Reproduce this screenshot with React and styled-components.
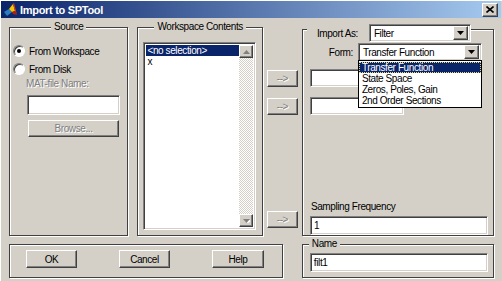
import styled, { createGlobalStyle } from "styled-components";

const GlobalStyle = createGlobalStyle`
  html, body { margin: 0; padding: 0; background: #d4d0c8; }
  body { font-family: "Liberation Sans", Arial, sans-serif; }
`;

const raised = `
  border: 1px solid;
  border-color: #fff #404040 #404040 #fff;
  box-shadow: inset -1px -1px 0 #808080, inset 1px 1px 0 #d4d0c8;
  background: #d4d0c8;
`;

const sunken = `
  border: 1px solid;
  border-color: #808080 #fff #fff #808080;
  box-shadow: inset 1px 1px 0 #404040, inset -1px -1px 0 #d4d0c8;
`;

const formTypes = [
  "Transfer Function",
  "State Space",
  "Zeros, Poles, Gain",
  "2nd Order Sections",
];

const MatlabIcon = () => (
  <svg width="14" height="14" viewBox="0 0 14 14">
    <polygon points="0,9 5,6 8,9 3,13" fill="#2a7fc0" />
    <polygon points="0,9 3,13 2,13 0,10" fill="#0b3d7a" />
    <polygon points="5,6 9,1 11,8 8,9" fill="#f7c600" />
    <polygon points="9,1 10,0 13,12 11,8" fill="#e0401a" />
    <polygon points="8,9 11,8 13,12 9,11" fill="#b02010" />
  </svg>
);

const CloseGlyph = () => (
  <svg width="8" height="7" viewBox="0 0 8 7">
    <path d="M0.5 0.5 L7.5 6.5 M7.5 0.5 L0.5 6.5" stroke="#000" strokeWidth="1.6" />
  </svg>
);

const DownTriangle = ({ disabled }) => (
  <svg width="7" height="4" viewBox="0 0 7 4">
    {disabled && <polygon points="1,1 8,1 4.5,5" fill="#fff" />}
    <polygon points="0,0 7,0 3.5,4" fill={disabled ? "#808080" : "#000"} />
  </svg>
);

const UpTriangle = () => (
  <svg width="7" height="4" viewBox="0 0 7 4">
    <polygon points="0,4 7,4 3.5,0" fill="#808080" />
  </svg>
);

const Combo = ({ value, width, children }) => (
  <ComboBox $w={width}>
    <ComboText>{value}</ComboText>
    <ComboArrow>
      <DownTriangle />
    </ComboArrow>
    {children}
  </ComboBox>
);

export default function App() {
  return (
    <>
      <GlobalStyle />
      <Window>
        <TitleBar>
          <MatlabIcon />
          <TitleText>Import to SPTool</TitleText>
          <CloseButton>
            <CloseGlyph />
          </CloseButton>
        </TitleBar>

        <Body>
          <TopRow>
            <Frame $w={120}>
              <Legend $center>Source</Legend>
              <RadioRow $mt={12}>
                <Radio $checked />
                From Workspace
              </RadioRow>
              <RadioRow $mt={6}>
                <Radio />
                From Disk
              </RadioRow>
              <DisabledLabel>MAT-file Name:</DisabledLabel>
              <Edit $w={93} $h={20} $mt={5} $ml={17} />
              <Button $w={91} $h={17} $mt={5} $ml={18} disabled>
                Browse...
              </Button>
            </Frame>

            <Frame $w={126} $ml={9}>
              <Legend $center>Workspace Contents</Legend>
              <ListBox>
                <ListItems>
                  <ListItem $selected>&lt;no selection&gt;</ListItem>
                  <ListItem>x</ListItem>
                </ListItems>
                <ScrollBar>
                  <ScrollButton>
                    <UpTriangle />
                  </ScrollButton>
                  <ScrollTrack />
                  <ScrollButton>
                    <DownTriangle disabled />
                  </ScrollButton>
                </ScrollBar>
              </ListBox>
            </Frame>

            <ArrowColumn>
              <Button $w={31} $h={17} disabled>--&gt;</Button>
              <Button $w={31} $h={17} $mt={11} disabled>--&gt;</Button>
              <Button $w={31} $h={17} $mt="auto" disabled>--&gt;</Button>
            </ArrowColumn>

            <Frame $w={193} $ml={4} $mt={2}>
              <ImportHeader>
                <span>Import As:</span>
                <Combo value="Filter" width={102} />
              </ImportHeader>
              <FormRow>
                <FormLabel>Form:</FormLabel>
                <Combo value="Transfer Function" width={124}>
                  <DropList>
                    {formTypes.map((t, i) => (
                      <DropItem key={t} $selected={i === 0}>
                        {t}
                      </DropItem>
                    ))}
                  </DropList>
                </Combo>
              </FormRow>
              <Edit $w={94} $h={18} $mt={8} $ml={7} />
              <Edit $w={94} $h={18} $mt={10} $ml={7} />
              <FieldLabel>Sampling Frequency</FieldLabel>
              <Edit $w={178} $h={19} $mt={3} $ml={7}>
                1
              </Edit>
            </Frame>
          </TopRow>

          <BottomRow>
            <ButtonFrame>
              <Button $w={51} $h={18}>OK</Button>
              <Button $w={51} $h={18}>Cancel</Button>
              <Button $w={52} $h={18}>Help</Button>
            </ButtonFrame>
            <Frame $w={193} $ml={19}>
              <Legend>Name</Legend>
              <Edit $w={178} $h={19} $mt={3} $ml={7}>
                filt1
              </Edit>
            </Frame>
          </BottomRow>
        </Body>
      </Window>
    </>
  );
}

const Window = styled.div`
  width: 502px;
  height: 281px;
  box-sizing: border-box;
  padding: 1px 1px 0 1px;
  background: #d4d0c8;
  box-shadow: inset 1px 1px 0 #fff;
  display: flex;
  flex-direction: column;
  overflow: hidden;
  font-family: "Liberation Sans", Arial, sans-serif;
  font-size: 10px;
  letter-spacing: -0.4px;
  color: #000;
`;

const TitleBar = styled.div`
  height: 17px;
  display: flex;
  align-items: center;
  padding: 0 3px 0 3px;
  background: linear-gradient(to right, #0a246a, #a6caf0);
`;

const TitleText = styled.span`
  margin-left: 2px;
  color: #fff;
  font-weight: bold;
  font-size: 11px;
  letter-spacing: -0.3px;
`;

const CloseButton = styled.div`
  ${raised}
  box-sizing: border-box;
  margin-left: auto;
  width: 16px;
  height: 14px;
  display: flex;
  align-items: center;
  justify-content: center;
`;

const Body = styled.div`
  flex: 1;
  display: flex;
  flex-direction: column;
  padding: 9px 7px 0 8px;
`;

const TopRow = styled.div`
  display: flex;
  height: 209px;
`;

const BottomRow = styled.div`
  display: flex;
  height: 34px;
  margin-top: 8px;
`;

const Frame = styled.div`
  box-sizing: border-box;
  width: ${(p) => p.$w}px;
  margin-left: ${(p) => p.$ml || 0}px;
  margin-top: ${(p) => p.$mt || 0}px;
  border: 1px solid #404040;
  box-shadow: inset 1px 1px 0 #fff, 1px 1px 0 #fff;
  display: flex;
  flex-direction: column;
  position: relative;
`;

const Legend = styled.div`
  align-self: ${(p) => (p.$center ? "center" : "flex-start")};
  margin: -7px 0 0 ${(p) => (p.$center ? 0 : 6)}px;
  height: 12px;
  line-height: 12px;
  padding: 0 3px;
  background: #d4d0c8;
`;

const RadioRow = styled.div`
  display: flex;
  align-items: center;
  gap: 4px;
  height: 12px;
  margin: ${(p) => p.$mt}px 0 0 3px;
`;

const Radio = styled.span`
  box-sizing: border-box;
  width: 12px;
  height: 12px;
  border-radius: 50%;
  border: 1px solid;
  border-color: #808080 #fff #fff #808080;
  background: #fff;
  box-shadow: inset 1px 1px 0 #404040;
  position: relative;
  &::after {
    content: "";
    display: ${(p) => (p.$checked ? "block" : "none")};
    position: absolute;
    left: 3px;
    top: 3px;
    width: 4px;
    height: 4px;
    border-radius: 50%;
    background: #000;
  }
`;

const DisabledLabel = styled.div`
  height: 12px;
  line-height: 12px;
  margin: 3px 0 0 16px;
  color: #808080;
  text-shadow: 1px 1px 0 #fff;
`;

const Edit = styled.div`
  ${sunken}
  box-sizing: border-box;
  background: #fff;
  width: ${(p) => p.$w}px;
  height: ${(p) => p.$h}px;
  margin: ${(p) => p.$mt || 0}px 0 0 ${(p) => p.$ml || 0}px;
  padding-left: 3px;
  display: flex;
  align-items: center;
  flex-shrink: 0;
`;

const Button = styled.div`
  ${raised}
  box-sizing: border-box;
  width: ${(p) => p.$w}px;
  height: ${(p) => p.$h}px;
  margin-top: ${(p) => (p.$mt === "auto" ? "auto" : `${p.$mt || 0}px`)};
  margin-left: ${(p) => p.$ml || 0}px;
  display: flex;
  align-items: center;
  justify-content: center;
  flex-shrink: 0;
  color: ${(p) => (p.disabled ? "#808080" : "#000")};
  text-shadow: ${(p) => (p.disabled ? "1px 1px 0 #fff" : "none")};
`;

const ListBox = styled.div`
  ${sunken}
  box-sizing: border-box;
  width: 113px;
  height: 188px;
  margin: 9px 0 0 5px;
  background: #fff;
  display: flex;
  padding: 2px;
`;

const ListItems = styled.div`
  flex: 1;
  display: flex;
  flex-direction: column;
`;

const ListItem = styled.div`
  height: 11px;
  line-height: 11px;
  padding-left: 1px;
  background: ${(p) => (p.$selected ? "#0a246a" : "transparent")};
  color: ${(p) => (p.$selected ? "#fff" : "#000")};
`;

const ScrollBar = styled.div`
  width: 14px;
  display: flex;
  flex-direction: column;
`;

const ScrollButton = styled.div`
  ${raised}
  box-sizing: border-box;
  height: 13px;
  display: flex;
  align-items: center;
  justify-content: center;
`;

const ScrollTrack = styled.div`
  flex: 1;
  background: repeating-conic-gradient(#d4d0c8 0 25%, #fff 0 50%) 0 0 / 2px 2px;
`;

const ArrowColumn = styled.div`
  width: 31px;
  margin-left: 4px;
  display: flex;
  flex-direction: column;
  padding: 43px 0 8px;
  box-sizing: border-box;
`;

const ImportHeader = styled.div`
  align-self: flex-start;
  display: flex;
  align-items: center;
  gap: 11px;
  margin: -6px 0 0 4px;
  padding-left: 10px;
  background: #d4d0c8;
`;

const ComboBox = styled.div`
  ${sunken}
  box-sizing: border-box;
  position: relative;
  width: ${(p) => p.$w}px;
  height: 18px;
  background: #fff;
  display: flex;
  align-items: center;
  padding: 2px;
`;

const ComboText = styled.span`
  flex: 1;
  padding-left: 2px;
`;

const ComboArrow = styled.div`
  ${raised}
  box-sizing: border-box;
  width: 15px;
  height: 14px;
  display: flex;
  align-items: center;
  justify-content: center;
`;

const FormRow = styled.div`
  display: flex;
  align-items: center;
  gap: 5px;
  margin-top: 1px;
`;

const FormLabel = styled.span`
  width: 50px;
  text-align: right;
`;

const DropList = styled.div`
  position: absolute;
  z-index: 2;
  left: -1px;
  top: 16px;
  width: 124px;
  box-sizing: border-box;
  border: 1px solid #000;
  background: #fff;
  padding: 1px 0;
`;

const DropItem = styled.div`
  height: 11px;
  line-height: 11px;
  padding-left: 3px;
  background: ${(p) => (p.$selected ? "#0a246a" : "#fff")};
  color: ${(p) => (p.$selected ? "#fff" : "#000")};
  outline: ${(p) => (p.$selected ? "1px dotted #e8d870" : "none")};
  outline-offset: -1px;
`;

const FieldLabel = styled.div`
  margin: auto 0 0 8px;
  height: 12px;
  line-height: 12px;
`;

const ButtonFrame = styled.div`
  box-sizing: border-box;
  width: 275px;
  border: 1px solid #404040;
  box-shadow: inset 1px 1px 0 #fff, 1px 1px 0 #fff;
  display: flex;
  align-items: flex-start;
  gap: 42px;
  padding: 5px 0 0 16px;
`;
